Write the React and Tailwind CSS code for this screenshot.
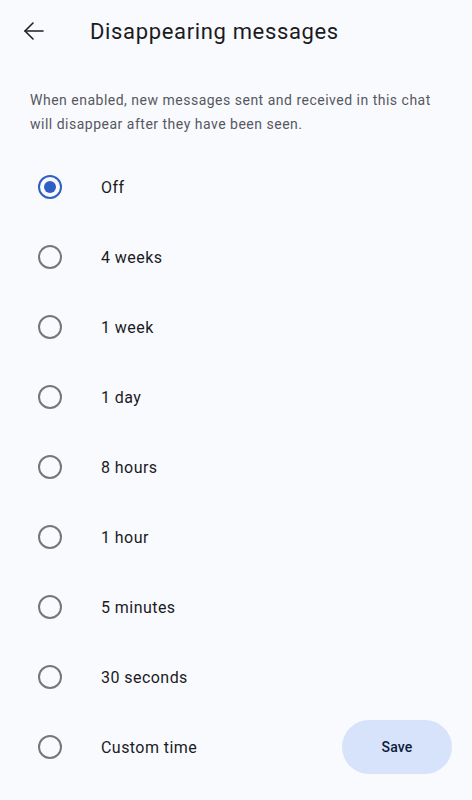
import React from "react";

const options = ["Off", "4 weeks", "1 week", "1 day", "8 hours", "1 hour", "5 minutes", "30 seconds", "Custom time"];

function Radio({ checked }) {
  if (checked) {
    return (
      <div className="w-6 h-6 rounded-full border-2 border-[#2f5fc4] flex items-center justify-center shrink-0">
        <div className="w-3 h-3 rounded-full bg-[#2f5fc4]" />
      </div>
    );
  }
  return <div className="w-6 h-6 rounded-full border-2 border-[#777777] shrink-0" />;
}

export default function App() {
  return (
    <div className="w-[472px] h-[800px] bg-[#f9fafe] overflow-hidden" style={{ fontFamily: "Roboto, 'Noto Sans', sans-serif" }}>
      <div className="h-[62px] flex items-center">
        <div className="w-[90px] pl-[22px] flex items-center">
          <svg width="24" height="24" viewBox="0 0 24 24" fill="none" stroke="#1f1f1f" strokeWidth="1.6" strokeLinecap="round" strokeLinejoin="round">
            <path d="M21 12H3" />
            <path d="M11 4l-8 8 8 8" />
          </svg>
        </div>
        <div className="text-[22px] tracking-[0.65px] text-[#1b1b1f]">Disappearing messages</div>
      </div>
      <div className="pt-[26px] px-[30px] text-[14px] leading-6 tracking-[0.5px] text-[#55585e]">
        When enabled, new messages sent and received in this chat will disappear after they have been seen.
      </div>
      <div className="pt-4">
        {options.map((o, i) => (
          <div key={o} className="h-[70px] flex items-center pl-[38px] pr-5">
            <Radio checked={i === 0} />
            <div className="ml-[39px] text-[16px] tracking-[0.45px] text-[#1b1b1f] flex-1 pt-px">{o}</div>
            {i === options.length - 1 && (
              <button className="w-[110px] h-[54px] rounded-full bg-[#d6e3fa] text-[14px] tracking-[0.2px] font-medium text-[#0f1b3a]">Save</button>
            )}
          </div>
        ))}
      </div>
    </div>
  );
}
